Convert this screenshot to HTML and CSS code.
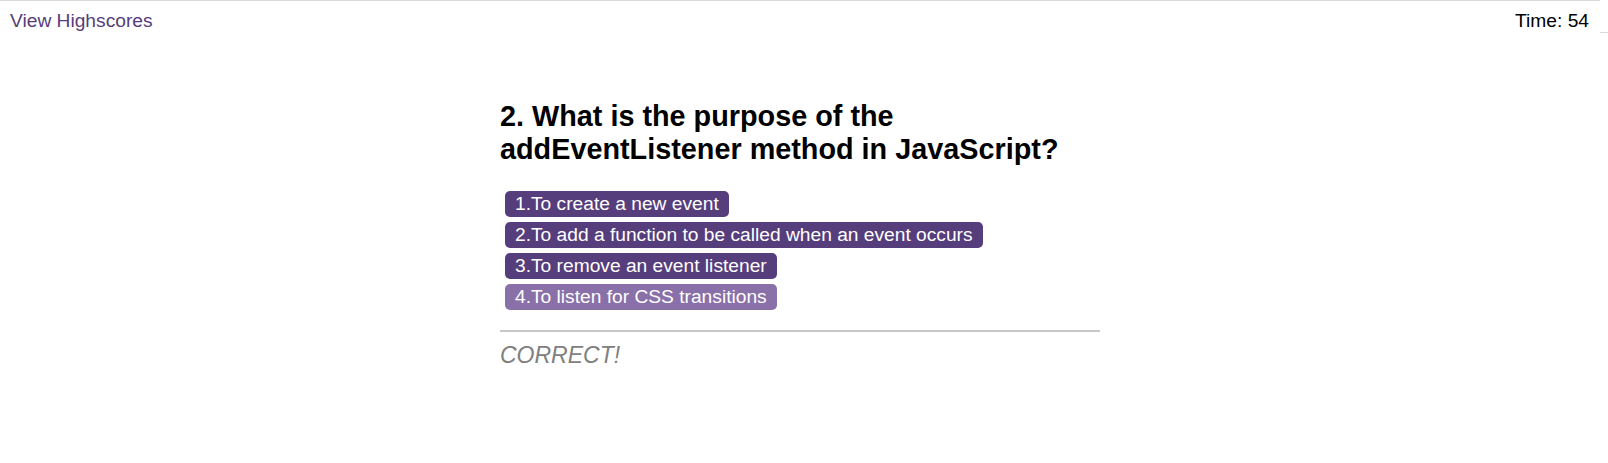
FILE: index.html
```html
<!DOCTYPE html>
<html lang="en">
<head>
<meta charset="utf-8">
<title>Code Quiz</title>
<link rel="stylesheet" href="styles.css">
</head>
<body>
<div class="page">
  <header class="topbar">
    <a class="highscores" href="#">View Highscores</a>
    <span class="timer">Time: 54</span>
  </header>
  <main class="quiz">
    <h2 class="question">2. What is the purpose of the addEventListener method in JavaScript?</h2>
    <div class="choices">
      <button class="choice">1.To create a new event</button>
      <button class="choice">2.To add a function to be called when an event occurs</button>
      <button class="choice">3.To remove an event listener</button>
      <button class="choice choice-hover">4.To listen for CSS transitions</button>
    </div>
    <hr class="divider">
    <p class="feedback">CORRECT!</p>
  </main>
</div>
<div class="gutter"></div>
</body>
</html>
```

FILE: styles.css
```css
html, body {
  margin: 0;
  padding: 0;
  background: #ffffff;
}

body {
  display: flex;
  align-items: flex-start;
  font-family: "Liberation Sans", Arial, sans-serif;
  font-size: 16px;
  color: #000;
}

.page {
  width: 1600px;
  flex: none;
  border-top: 1px solid #dadada;
  min-height: 462px;
}

.gutter {
  flex: 1;
  height: 32px;
  border-bottom: 1px solid #dadada;
}

.topbar {
  display: flex;
  justify-content: space-between;
  padding: 9px 11px 0 10px;
  font-size: 19.2px;
  line-height: normal;
}

.highscores {
  color: #563d7c;
  text-decoration: none;
}

.timer {
  color: #000;
}

.quiz {
  width: 600px;
  margin: 68px auto 0;
}

.question {
  margin: 0;
  font-size: 28.8px;
  font-weight: bold;
  line-height: normal;
}

.choices {
  display: flex;
  flex-direction: column;
  align-items: flex-start;
  gap: 5px;
  margin-top: 25px;
  padding-left: 5px;
}

.choice {
  font-family: "Liberation Sans", Arial, sans-serif;
  font-size: 19.2px;
  line-height: normal;
  color: #ffffff;
  background: #563d7c;
  border: none;
  border-radius: 5px;
  padding: 2px 10px;
  margin: 0;
  cursor: pointer;
}

.choice-hover {
  background: #8a70a8;
}

.divider {
  margin: 20px 0 0;
  border: 0;
  border-top: 2px solid #c8c8c8;
  height: 0;
}

.feedback {
  margin: 10px 0 0;
  font-size: 23px;
  font-style: italic;
  color: #808080;
}
```
